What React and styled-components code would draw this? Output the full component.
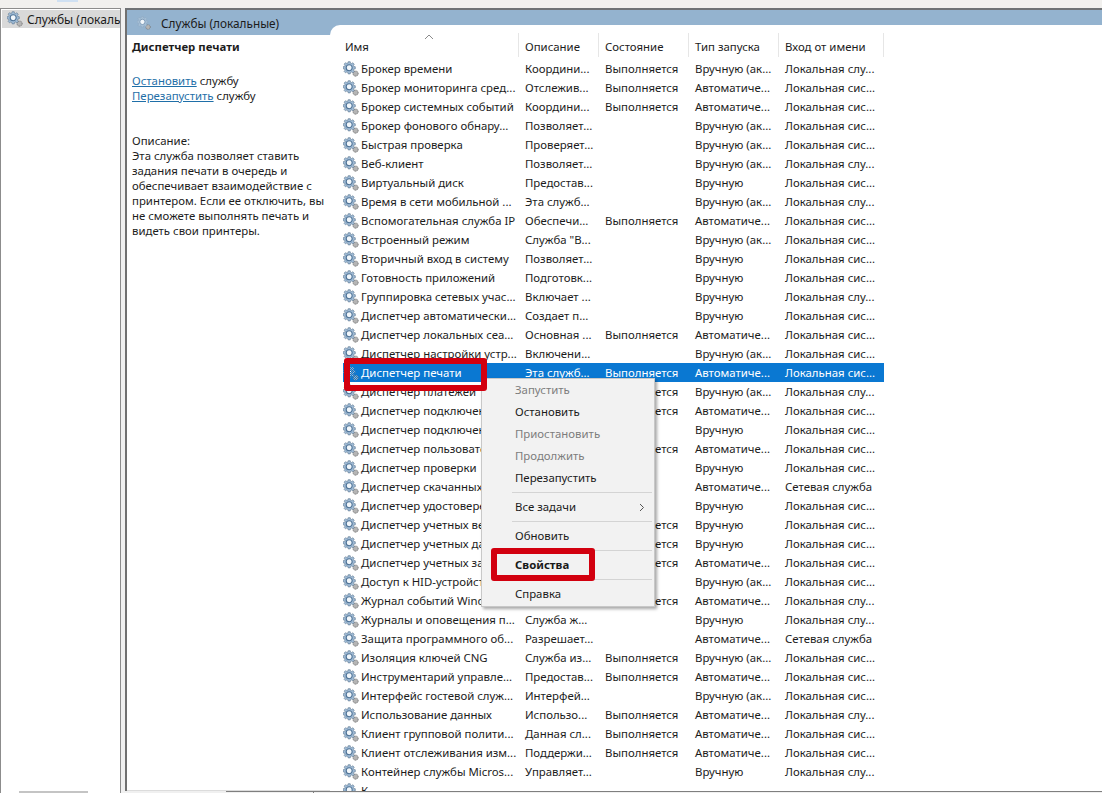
import React from "react";
import styled, { createGlobalStyle } from "styled-components";

const GlobalStyle = createGlobalStyle`
  html, body {
    margin: 0;
    padding: 0;
    height: 100%;
    overflow: hidden;
    background: #fff;
    font-family: "Noto Sans", "Open Sans", sans-serif;
    font-size: 11.4px;
    color: #1c1c1c;
  }
`;

const Window = styled.div`
  position: relative;
  width: 1102px;
  height: 793px;
  overflow: hidden;
  display: flex;
  flex-direction: column;
  background: #f0f0f0;
`;

const TopStrip = styled.div`
  height: 8px;
  flex: none;
  padding-left: 57px;
  background: #f1f0ee;
`;

const TopTab = styled.div`
  width: 21px;
  height: 2px;
  background: #cfe0f2;
`;

const Body = styled.div`
  flex: 1;
  min-height: 0;
  display: flex;
`;

const Tree = styled.div`
  width: 119px;
  flex: none;
  display: flex;
  flex-direction: column;
  background: #fff;
  border: 1px solid #8c8c8c;
  border-width: 1px 1px 0 1px;
`;

const TreeItem = styled.div`
  height: 18px;
  margin: 1px 0 0 1px;
  display: flex;
  align-items: center;
  gap: 4px;
  padding-left: 5px;
  font-size: 12px;
  background: #d9d9d9;
  white-space: nowrap;
  overflow: hidden;
`;

const TreeScroll = styled.div`
  width: 69px;
  height: 2px;
  margin: auto 0 0 18px;
  background: #c4c4c4;
`;

const Splitter = styled.div`
  width: 4px;
  flex: none;
`;

const Panel = styled.div`
  flex: 1;
  min-width: 0;
  display: flex;
  margin-bottom: 2px;
  background: #94b3cf;
  border-left: 2px solid #707070;
  border-top: 2px solid #6f7275;
`;

const InfoColumn = styled.div`
  width: 203px;
  flex: none;
  display: flex;
  flex-direction: column;
`;

const Band = styled.div`
  height: 25px;
  flex: none;
  padding-left: 10px;
  display: flex;
  align-items: center;
  gap: 10px;
  font-size: 11.8px;
`;

const Info = styled.div`
  flex: 1;
  padding: 4px 2px 0 5px;
  line-height: 15px;
  background: #fff;
  border-bottom: 1px solid #dcdcdc;
`;

const InfoTitle = styled.div`
  font-weight: 700;
  margin-bottom: 19px;
`;

const InfoAction = styled.div`
  white-space: nowrap;
`;

const ActionLink = styled.a`
  color: #1f6fa8;
  text-decoration: underline;
`;

const InfoLabel = styled.div`
  margin-top: 30px;
`;

const Table = styled.div`
  flex: 1;
  min-width: 0;
  margin-top: 15px;
  padding-left: 13px;
  background: #fff;
  border-radius: 10px 0 0 0;
  overflow: hidden;
`;

const HeaderRow = styled.div`
  position: relative;
  display: grid;
  grid-template-columns: 176px 80px 90px 90px 105px;
  width: 541px;
  height: 34px;
`;

const HeaderCell = styled.div`
  height: 24px;
  margin-top: 8px;
  padding-left: ${(p) => (p.$first ? 2 : 6)}px;
  box-sizing: border-box;
  line-height: 28px;
  border-right: 1px solid #e6e6e6;
  white-space: nowrap;
`;

const SortArrow = styled.svg`
  position: absolute;
  left: 81px;
  top: 9px;
`;

const Row = styled.div`
  display: grid;
  grid-template-columns: 176px 80px 90px 90px 105px;
  width: 541px;
  height: 19px;
  line-height: 19px;
  white-space: nowrap;
  background: ${(p) => (p.$selected ? "#0a78d2" : "transparent")};
  color: ${(p) => (p.$selected ? "#fff" : "inherit")};
`;

const NameCell = styled.div`
  display: flex;
  align-items: center;
  gap: 2px;
  overflow: hidden;
`;

const Cell = styled.div`
  padding-left: 6px;
  overflow: hidden;
`;

const Menu = styled.div`
  position: absolute;
  left: 481px;
  top: 378px;
  width: 174px;
  height: 229px;
  box-sizing: border-box;
  background: #f2f2f2;
  border: 1px solid #c8c8c8;
  box-shadow: 2px 2px 3px rgba(0, 0, 0, 0.35);
`;

const MenuItem = styled.div`
  position: relative;
  height: 22px;
  line-height: 22px;
  padding-left: 33px;
  color: ${(p) => (p.$disabled ? "#7d7d7d" : "#1a1a1a")};
  font-weight: ${(p) => (p.$bold ? 700 : 400)};
`;

const MenuSeparator = styled.div`
  height: 1px;
  margin: 3px 2px 3px 30px;
  background: #d4d4d4;
`;

const Chevron = styled.svg`
  position: absolute;
  right: 9px;
  top: 7px;
`;

const Highlight = styled.div`
  position: absolute;
  left: ${(p) => p.$x}px;
  top: ${(p) => p.$y}px;
  width: ${(p) => p.$w}px;
  height: ${(p) => p.$h}px;
  box-sizing: border-box;
  border: 6px solid #d2000f;
  border-radius: 3px;
`;

const BottomBar = styled.div`
  position: absolute;
  left: 226px;
  right: 0;
  bottom: 0;
  height: 1px;
  background: #f0f0f0;
  border-top: 1px solid #7f7f7f;
`;

const BottomTick = styled.div`
  position: absolute;
  left: 87px;
  top: 0;
  width: 1px;
  height: 1px;
  background: #7f7f7f;
`;

function GearIcon({ size = 16, selected, pale }) {
  return (
    <svg width={size} height={size} viewBox="0 0 16 16" style={{ flex: "none" }}>
      <defs>
        <pattern id="dither" width="2" height="2" patternUnits="userSpaceOnUse">
          <rect width="1" height="1" fill="#0a78d2" />
          <rect x="1" y="1" width="1" height="1" fill="#0a78d2" />
        </pattern>
      </defs>
      <circle cx="12.6" cy="12.6" r="2.6" fill="#b5b5b5" stroke="#6e6e6e" strokeWidth="0.9" strokeDasharray="1 0.7" />
      <g transform="scale(0.86)">
        <path
          d="M6 0.8h2.4l.3 1.7 1.3.5 1.4-1 1.7 1.7-1 1.4.5 1.3 1.7.3v2.4l-1.7.3-.5 1.3 1 1.4-1.7 1.7-1.4-1-1.3.5-.3 1.7H6l-.3-1.7-1.3-.5-1.4 1-1.7-1.7 1-1.4-.5-1.3L.1 9V6.6l1.7-.3.5-1.3-1-1.4L3 1.9l1.4 1 1.3-.5z"
          fill={pale ? "#a5bfd6" : "#9fbbd6"}
          stroke={pale ? "#8fa9c2" : "#5f7890"}
          strokeWidth="0.7"
        />
        <circle cx="7.2" cy="7.8" r="3.5" fill="#f2f7fb" stroke={pale ? "#7d9ab6" : "#4f7396"} strokeWidth="1.3" />
      </g>
      {selected && <rect width="16" height="16" fill="url(#dither)" />}
    </svg>
  );
}

const services = [
  ["Брокер времени", "Координи...", "Выполняется", "Вручную (ак...", "Локальная слу..."],
  ["Брокер мониторинга сред...", "Отслежив...", "Выполняется", "Автоматиче...", "Локальная сис..."],
  ["Брокер системных событий", "Координи...", "Выполняется", "Автоматиче...", "Локальная сис..."],
  ["Брокер фонового обнару...", "Позволяет...", "", "Вручную (ак...", "Локальная сис..."],
  ["Быстрая проверка", "Проверяет...", "", "Вручную (ак...", "Локальная сис..."],
  ["Веб-клиент", "Позволяет...", "", "Вручную (ак...", "Локальная слу..."],
  ["Виртуальный диск", "Предостав...", "", "Вручную", "Локальная сис..."],
  ["Время в сети мобильной ...", "Эта служб...", "", "Вручную (ак...", "Локальная слу..."],
  ["Вспомогательная служба IP", "Обеспечи...", "Выполняется", "Автоматиче...", "Локальная сис..."],
  ["Встроенный режим", "Служба \"В...", "", "Вручную (ак...", "Локальная сис..."],
  ["Вторичный вход в систему", "Позволяет...", "", "Вручную", "Локальная сис..."],
  ["Готовность приложений", "Подготовк...", "", "Вручную", "Локальная сис..."],
  ["Группировка сетевых учас...", "Включает ...", "", "Вручную", "Локальная слу..."],
  ["Диспетчер автоматически...", "Создает п...", "", "Вручную", "Локальная сис..."],
  ["Диспетчер локальных сеа...", "Основная ...", "Выполняется", "Автоматиче...", "Локальная сис..."],
  ["Диспетчер настройки устр...", "Включени...", "", "Вручную (ак...", "Локальная сис..."],
  ["Диспетчер печати", "Эта служб...", "Выполняется", "Автоматиче...", "Локальная сис..."],
  ["Диспетчер платежей", "", "Выполняется", "Вручную (ак...", "Локальная слу..."],
  ["Диспетчер подключений", "", "Выполняется", "Автоматиче...", "Локальная сис..."],
  ["Диспетчер подключений", "", "", "Вручную", "Локальная сис..."],
  ["Диспетчер пользователей", "", "Выполняется", "Автоматиче...", "Локальная сис..."],
  ["Диспетчер проверки", "", "", "Вручную", "Локальная сис..."],
  ["Диспетчер скачанных", "", "", "Автоматиче...", "Сетевая служба"],
  ["Диспетчер удостоверений", "", "", "Вручную", "Локальная сис..."],
  ["Диспетчер учетных веб", "", "Выполняется", "Вручную", "Локальная сис..."],
  ["Диспетчер учетных данных", "", "Выполняется", "Вручную", "Локальная сис..."],
  ["Диспетчер учетных записей", "", "Выполняется", "Автоматиче...", "Локальная сис..."],
  ["Доступ к HID-устройствам", "", "", "Вручную (ак...", "Локальная сис..."],
  ["Журнал событий Windows", "", "Выполняется", "Автоматиче...", "Локальная слу..."],
  ["Журналы и оповещения п...", "Служба ж...", "", "Вручную", "Локальная слу..."],
  ["Защита программного об...", "Разрешает...", "", "Автоматиче...", "Сетевая служба"],
  ["Изоляция ключей CNG", "Служба из...", "Выполняется", "Вручную (ак...", "Локальная сис..."],
  ["Инструментарий управле...", "Предостав...", "Выполняется", "Автоматиче...", "Локальная сис..."],
  ["Интерфейс гостевой служ...", "Интерфей...", "", "Вручную (ак...", "Локальная сис..."],
  ["Использование данных", "Использо...", "Выполняется", "Автоматиче...", "Локальная слу..."],
  ["Клиент групповой полити...", "Данная сл...", "Выполняется", "Автоматиче...", "Локальная сис..."],
  ["Клиент отслеживания изм...", "Поддержи...", "Выполняется", "Автоматиче...", "Локальная сис..."],
  ["Контейнер службы Micros...", "Управляет...", "", "Вручную", "Локальная слу..."],
  ["К", "", "", "", ""],
];

const columns = ["Имя", "Описание", "Состояние", "Тип запуска", "Вход от имени"];

export default function App() {
  return (
    <Window>
      <GlobalStyle />
      <TopStrip>
        <TopTab />
      </TopStrip>
      <Body>
        <Tree>
          <TreeItem>
            <GearIcon />
            Службы (локальные)
          </TreeItem>
          <TreeScroll />
        </Tree>
        <Splitter />
        <Panel>
          <InfoColumn>
            <Band>
              <GearIcon size={14} pale />
              Службы (локальные)
            </Band>
            <Info>
              <InfoTitle>Диспетчер печати</InfoTitle>
              <InfoAction>
                <ActionLink>Остановить</ActionLink> службу
              </InfoAction>
              <InfoAction>
                <ActionLink>Перезапустить</ActionLink> службу
              </InfoAction>
              <InfoLabel>Описание:</InfoLabel>
              <div>
                Эта служба позволяет ставить задания печати в очередь и обеспечивает
                взаимодействие с принтером. Если ее отключить, вы не сможете выполнять
                печать и видеть свои принтеры.
              </div>
            </Info>
          </InfoColumn>
          <Table>
            <HeaderRow>
              {columns.map((c, i) => (
                <HeaderCell key={c} $first={i === 0}>
                  {c}
                </HeaderCell>
              ))}
              <SortArrow width="10" height="6" viewBox="0 0 10 6">
                <path d="M1 5l4-4 4 4" fill="none" stroke="#8a8a8a" />
              </SortArrow>
            </HeaderRow>
            {services.map((s, i) => (
              <Row key={i} $selected={i === 16}>
                <NameCell>
                  <GearIcon selected={i === 16} />
                  {s[0]}
                </NameCell>
                <Cell>{s[1]}</Cell>
                <Cell>{s[2]}</Cell>
                <Cell>{s[3]}</Cell>
                <Cell>{s[4]}</Cell>
              </Row>
            ))}
          </Table>
        </Panel>
      </Body>
      <BottomBar>
        <BottomTick />
      </BottomBar>
      <Menu>
        <MenuItem $disabled>Запустить</MenuItem>
        <MenuItem>Остановить</MenuItem>
        <MenuItem $disabled>Приостановить</MenuItem>
        <MenuItem $disabled>Продолжить</MenuItem>
        <MenuItem>Перезапустить</MenuItem>
        <MenuSeparator />
        <MenuItem>
          Все задачи
          <Chevron width="6" height="9" viewBox="0 0 6 9">
            <path d="M1 1l3.5 3.5L1 8" fill="none" stroke="#555" />
          </Chevron>
        </MenuItem>
        <MenuSeparator />
        <MenuItem>Обновить</MenuItem>
        <MenuSeparator />
        <MenuItem $bold>Свойства</MenuItem>
        <MenuSeparator />
        <MenuItem>Справка</MenuItem>
      </Menu>
      <Highlight $x={344} $y={358} $w={143} $h={33} />
      <Highlight $x={491} $y={548} $w={104} $h={33} />
    </Window>
  );
}
